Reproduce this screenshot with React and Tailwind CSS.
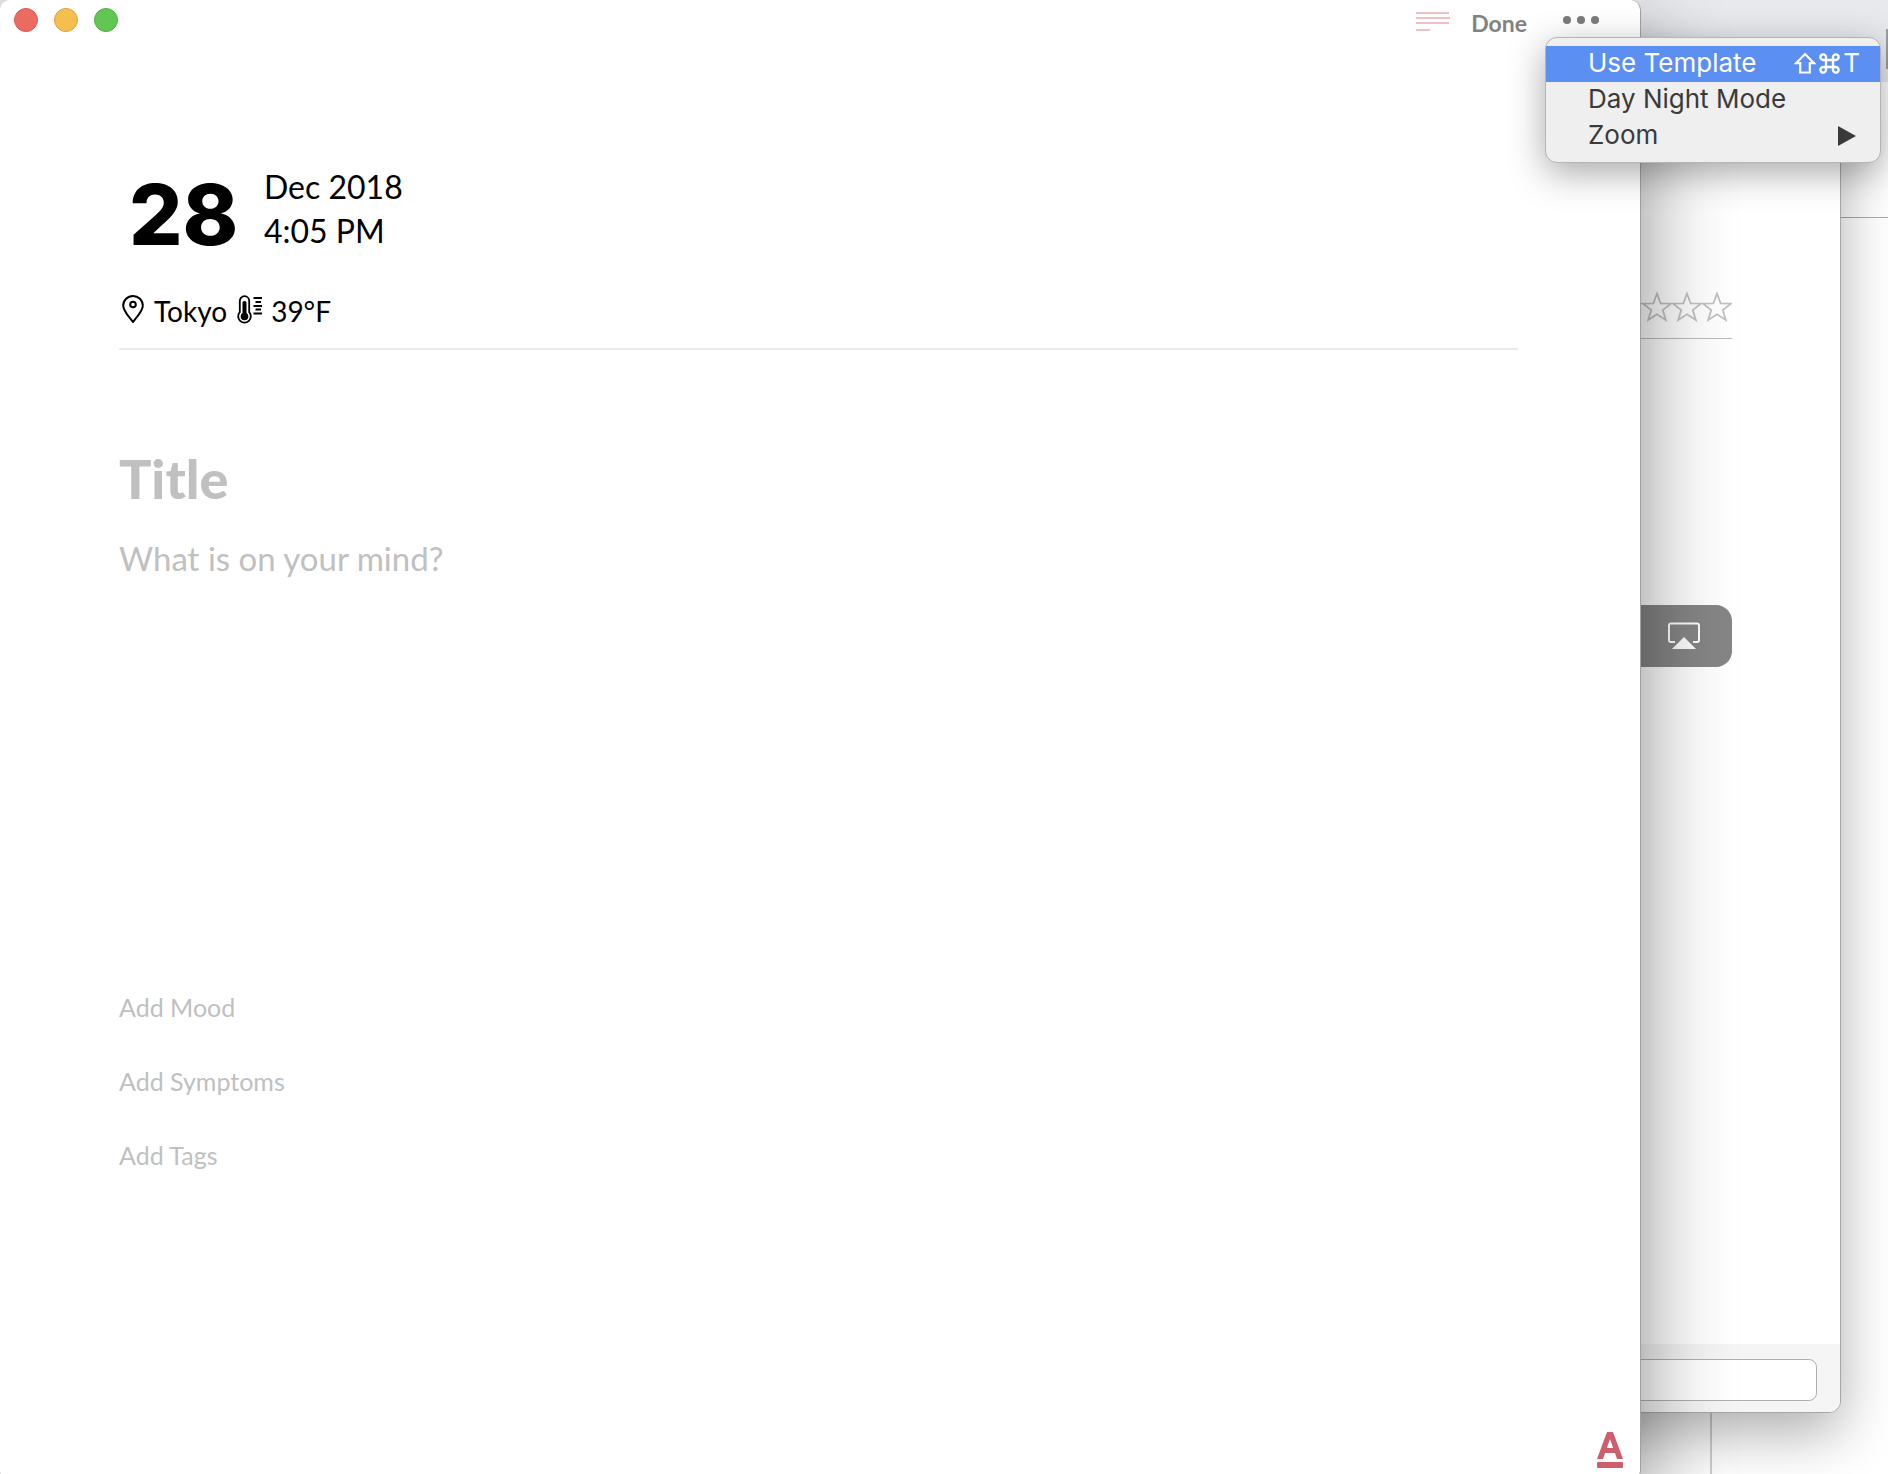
import React from "react";

function Star() {
  return (
    <svg viewBox="0 0 30 30" className="h-[30px] w-[30px]" fill="#fff" stroke="#c2c2c2" strokeWidth="1.8" aria-hidden="true">
      <path d="M15 1.5 18.6 11.3 29 11.6 20.8 18 23.8 28 15 22.3 6.200 28 9.2 18 1 11.600 11.4 11.3Z" />
    </svg>
  );
}

function PinIcon() {
  return (
    <svg viewBox="0 0 22 28" className="h-7 w-[22px]" fill="none" stroke="#000" strokeWidth="2" aria-hidden="true">
      <path d="M11 27C7 21.500 1.200 16.500 1.200 10.600A9.800 9.600 0 0 1 20.800 10.600C20.800 16.500 15 21.500 11 27Z" />
      <circle cx="11" cy="9.500" r="2.800" />
    </svg>
  );
}

function ThermometerIcon() {
  return (
    <svg viewBox="0 0 26 29" className="h-[29px] w-[26px]" fill="none" stroke="#000" aria-hidden="true">
      <path d="M2.800 17.200V6A4.700 4.900 0 0 1 12.200 6V17.200A6.300 6.300 0 1 1 2.800 17.200Z" strokeWidth="1.800" />
      <path d="M7.500 8V20" strokeWidth="4" strokeLinecap="round" />
      <circle cx="7.500" cy="21.500" r="3.800" fill="#000" stroke="none" />
      <path d="M16.500 3H25M18.500 7H24M16.500 11H25M18.500 14.500H24M16.500 18.500H25" strokeWidth="1.900" />
    </svg>
  );
}

function DesktopWindow() {
  return (
    <div className="absolute inset-0 flex flex-col bg-white">
      <div className="flex h-[82px] justify-end bg-[#e8e9ed] pt-[29px]">
        <div className="h-10 w-0.5 bg-[#9b9da1]" />
      </div>
      <div className="h-[136px] border-b border-[#a9a9a9]" />
      <div className="flex-1 pr-[176px]">
        <div className="h-full border-r-2 border-[#cfcfcf]" />
      </div>
    </div>
  );
}

function ViewerWindow() {
  return (
    <section
      aria-label="Entry"
      className="absolute top-[110px] right-[47px] bottom-[61px] left-10 flex flex-col overflow-hidden rounded-xl border border-[#a6a6a6] bg-white shadow-[0_20px_56px_rgba(0,0,0,0.32)]"
    >
      <div className="flex flex-1 flex-col pr-[108px] pt-[181px]">
        <div className="flex justify-end border-b border-[#bdbdbd] pb-4" role="img" aria-label="Rating">
          <Star />
          <Star />
          <Star />
          <Star />
          <Star />
        </div>
        <div className="mt-[266px] flex h-[62px] items-center justify-end rounded-2xl bg-[#868686] pr-[31px]">
          <button type="button" aria-label="AirPlay">
            <svg viewBox="0 0 34 28" className="h-7 w-[34px]" fill="none" stroke="#fff" strokeWidth="2" aria-hidden="true">
              <path d="M8 20H3.500A1.800 1.800 0 0 1 2 18.200V3A1.800 1.800 0 0 1 3.500 1.500H30.500A1.800 1.800 0 0 1 32 3V18.200A1.800 1.800 0 0 1 30.500 20H26" />
              <path d="M17 15 29 27H5Z" fill="#fff" stroke="none" />
            </svg>
          </button>
        </div>
      </div>
      <div className="flex h-[68px] items-start bg-[#f5f5f5] px-[23px] pt-[15px]">
        <input aria-label="Comment" className="h-[42px] w-full rounded-lg border border-[#b0b0b0] bg-white px-3 outline-none" />
      </div>
    </section>
  );
}

function TitleBar() {
  return (
    <header className="flex h-10 items-center justify-between pr-[41px] pl-[14px]">
      <div className="flex gap-4">
        <button type="button" aria-label="Close" className="h-6 w-6 rounded-full border border-[#d9584e] bg-[#ec6b60]" />
        <button type="button" aria-label="Minimize" className="h-6 w-6 rounded-full border border-[#dba144] bg-[#f5bf4f]" />
        <button type="button" aria-label="Zoom window" className="h-6 w-6 rounded-full border border-[#4fae43] bg-[#61c654]" />
      </div>
      <div className="flex items-center font-[Lato,sans-serif]">
        <button type="button" aria-label="Notes" className="mt-1">
          <svg viewBox="0 0 34 20" className="h-5 w-[34px]" stroke="#efbfc6" strokeWidth="2" aria-hidden="true">
            <path d="M0 1H33M0 6H34M0 11H33M0 18H14" />
          </svg>
        </button>
        <button type="button" className="mt-[6px] ml-[21px] text-[23px] leading-7 font-bold text-[#828282]">
          Done
        </button>
        <button type="button" aria-label="More" className="ml-9 flex gap-[6px]">
          <span className="h-2 w-2 rounded-full bg-[#7b7b7b]" />
          <span className="h-2 w-2 rounded-full bg-[#7b7b7b]" />
          <span className="h-2 w-2 rounded-full bg-[#7b7b7b]" />
        </button>
      </div>
    </header>
  );
}

function EditorWindow() {
  return (
    <main className="absolute top-0 right-[247px] -bottom-[6px] left-0 flex flex-col rounded-[10px] border-r border-[#a0a0a0] bg-white font-[Lato,sans-serif] shadow-[0_36px_90px_rgba(0,0,0,0.46)]">
      <TitleBar />
      <div className="flex flex-1 flex-col pt-[125px] pr-[122px] pl-[119px]">
        <div className="flex items-start pl-[10px]">
          <div className="w-[135px] pt-2 font-[Inter,sans-serif] text-[84px] leading-[84px] font-extrabold">28</div>
          <div className="text-[32px] leading-11 text-black">
            <div>Dec 2018</div>
            <div>4:05 PM</div>
          </div>
        </div>
        <div className="mt-9 flex h-[57px] items-start border-b-2 border-[#ebebeb] pl-[3px] text-[28px] leading-9">
          <span className="mt-[2px]">
            <PinIcon />
          </span>
          <span className="ml-[10px]">Tokyo</span>
          <span className="mt-[2px] ml-[10px]">
            <ThermometerIcon />
          </span>
          <span className="ml-2">39°F</span>
        </div>
        <input
          aria-label="Title"
          placeholder="Title"
          className="mt-[97px] h-16 w-full text-[54px] leading-[64px] font-black outline-none placeholder:text-[#c0c0c0]"
        />
        <textarea
          aria-label="Entry text"
          placeholder="What is on your mind?"
          className="mt-[25px] h-[380px] w-full resize-none text-[33px] leading-[44px] outline-none placeholder:text-[#c0c0c0]"
        />
        <div className="mt-[73px] flex flex-col items-start gap-[38px] text-[25px] leading-9 text-[#c0c0c0]">
          <button type="button">Add Mood</button>
          <button type="button">Add Symptoms</button>
          <button type="button">Add Tags</button>
        </div>
      </div>
      <div className="flex justify-end pr-[17px] pb-3">
        <button type="button" aria-label="Text style">
          <svg viewBox="0 0 26 36" className="h-9 w-[26px]" fill="#cd5f6c" aria-hidden="true">
            <path fillRule="evenodd" d="M10 0H16L26 27H20L18 21H8L6 27H0ZM13 7 9.800 16H16.200Z" />
            <rect y="30" width="26" height="6" rx="1" />
          </svg>
        </button>
      </div>
    </main>
  );
}

function OptionsMenu() {
  return (
    <div
      role="menu"
      className="absolute top-[37px] right-[7px] flex w-[336px] flex-col rounded-xl border border-[#b4b4b4] bg-[#eeefee] pt-2 pb-2 font-[Inter,sans-serif] text-[26px] leading-[34px] text-[#3a3a3a] shadow-[0_10px_36px_rgba(0,0,0,0.34)]"
    >
      <button type="button" role="menuitem" className="flex h-9 items-start justify-between bg-[#5b8ff2] pr-5 pl-[42px] text-white">
        <span>Use Template</span>
        <span className="flex items-center gap-[3px]">
          <svg viewBox="0 0 22 22" className="h-[22px] w-[22px]" fill="none" stroke="#fff" strokeWidth="2.200" aria-hidden="true">
            <path d="M11 2 20 11.200H15.800V20.500H6.200V11.200H2Z" />
          </svg>
          <svg viewBox="0 0 21 21" className="h-[21px] w-[21px]" fill="none" stroke="#fff" strokeWidth="2.400" aria-hidden="true">
            <path d="M7 7V4.300A2.800 2.800 0 1 0 4.300 7H16.700A2.800 2.800 0 1 0 14 4.300V16.700A2.800 2.800 0 1 0 16.700 14H4.300A2.800 2.800 0 1 0 7 16.700Z" />
          </svg>
          <span>T</span>
        </span>
      </button>
      <button type="button" role="menuitem" className="flex h-9 items-start pl-[42px]">
        Day Night Mode
      </button>
      <button type="button" role="menuitem" className="flex h-9 items-start justify-between pr-6 pl-[42px]">
        <span>Zoom</span>
        <svg viewBox="0 0 18 20" className="mt-2 h-5 w-[18px]" fill="#3a3a3a" aria-hidden="true">
          <path d="M0 0 18 10 0 20Z" />
        </svg>
      </button>
    </div>
  );
}

export default function App() {
  return (
    <div className="relative h-screen w-full overflow-hidden bg-white">
      <DesktopWindow />
      <ViewerWindow />
      <EditorWindow />
      <OptionsMenu />
    </div>
  );
}
